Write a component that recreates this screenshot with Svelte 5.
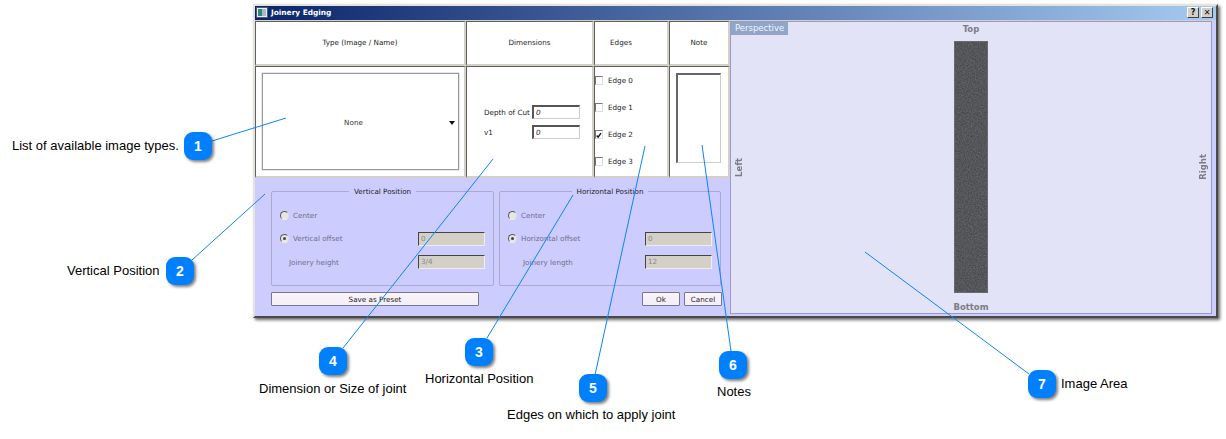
<!-- App.svelte - Joinery Edging dialog with numbered help callouts -->
<script lang="ts">
	const callouts = [
		{ n: 1, x: 184, y: 132, line: [212, 141, 286, 118], label: 'List of available image types.', lx: 12, ly: 139 },
		{ n: 2, x: 166, y: 257, line: [192, 260, 265, 194], label: 'Vertical Position', lx: 67, ly: 264 },
		{ n: 3, x: 465, y: 338, line: [487, 338, 573, 195], label: 'Horizontal Position', lx: 425, ly: 372 },
		{ n: 4, x: 319, y: 347, line: [343, 348, 493, 159], label: 'Dimension or Size of joint', lx: 259, ly: 382 },
		{ n: 5, x: 579, y: 374, line: [595, 375, 645, 146], label: 'Edges on which to apply joint', lx: 507, ly: 408 },
		{ n: 6, x: 719, y: 351, line: [731, 351, 702, 145], label: 'Notes', lx: 717, ly: 385 },
		{ n: 7, x: 1028, y: 370, line: [1029, 374, 865, 252], label: 'Image Area', lx: 1061, ly: 377 }
	];

	const edges = [
		{ name: 'Edge 0', checked: false },
		{ name: 'Edge 1', checked: false },
		{ name: 'Edge 2', checked: true },
		{ name: 'Edge 3', checked: false }
	];

	const groups = [
		{ title: 'Vertical Position', offset: 'Vertical offset', size: 'Joinery height', value: '3/4' },
		{ title: 'Horizontal Position', offset: 'Horizontal offset', size: 'Joinery length', value: '12' }
	];
</script>

<div class="page">
	<div class="window">
		<div class="titlebar">
			<svg class="app-icon" width="12" height="11" viewBox="0 0 12 11">
				<rect x="0.5" y="0.5" width="11" height="10" fill="#e8eef4" stroke="#4a5a78" />
				<rect x="2" y="2" width="4" height="7" fill="#2f8a70" />
				<rect x="6" y="2" width="4" height="7" fill="#a8b8d0" />
			</svg>
			<span class="title">Joinery Edging</span>
			<span class="title-btn">?</span>
			<span class="title-btn">✕</span>
		</div>

		<div class="body">
			<div class="left">
				<div class="table">
					<div class="cell head">Type (Image / Name)</div>
					<div class="cell head">Dimensions</div>
					<div class="cell head edges-head">Edges</div>
					<div class="cell head">Note</div>

					<div class="cell type-cell">
						<div class="combo">
							<span>None</span>
							<span class="arrow"></span>
						</div>
					</div>

					<div class="cell dims">
						<div class="dim-grid">
							<span>Depth of Cut</span>
							<span class="input">0</span>
							<span>v1</span>
							<span class="input">0</span>
						</div>
					</div>

					<div class="cell edges">
						{#each edges as edge}
							<div class="edge">
								<span class="check">
									{#if edge.checked}
										<svg width="9" height="9" viewBox="0 0 9 9">
											<path d="M1 4.5 L3.2 7 L7.5 1" fill="none" stroke="#111" stroke-width="2" />
										</svg>
									{/if}
								</span>
								{edge.name}
							</div>
						{/each}
					</div>

					<div class="cell note-cell">
						<div class="note"></div>
					</div>
				</div>

				<div class="lower">
					<div class="groups">
						{#each groups as group}
							<fieldset class="group">
								<legend>{group.title}</legend>
								<div class="row">
									<span class="radio"></span>
									<span>Center</span>
								</div>
								<div class="row">
									<span class="radio on"></span>
									<span>{group.offset}</span>
									<span class="field">0</span>
								</div>
								<div class="row indent">
									<span>{group.size}</span>
									<span class="field">{group.value}</span>
								</div>
							</fieldset>
						{/each}
					</div>
					<div class="actions">
						<button class="preset">Save as Preset</button>
						<button class="ok">Ok</button>
						<button class="cancel">Cancel</button>
					</div>
				</div>
			</div>

			<div class="preview">
				<span class="tab">Perspective</span>
				<span class="side top">Top</span>
				<span class="side vert left-label">Left</span>
				<svg class="board" width="34" height="252">
					<filter id="grain">
						<feTurbulence type="fractalNoise" baseFrequency="0.7" numOctaves="3" seed="4" />
						<feColorMatrix values="0 0 0 0 0.2  0 0 0 0 0.2  0 0 0 0 0.22  0.7 0.7 0 0 -0.45" />
					</filter>
					<rect width="34" height="252" fill="#48494d" />
					<rect width="34" height="252" filter="url(#grain)" />
					<rect x="0.5" y="0.5" width="33" height="251" fill="none" stroke="#6a6a6e" />
				</svg>
				<span class="side vert right-label">Right</span>
				<span class="side bottom">Bottom</span>
			</div>
		</div>
	</div>

	<svg class="lines" width="1226" height="439">
		{#each callouts as c}
			<line x1={c.line[0]} y1={c.line[1]} x2={c.line[2]} y2={c.line[3]} />
		{/each}
	</svg>

	{#each callouts as c}
		<span class="badge" style="left: {c.x}px; top: {c.y}px;">{c.n}</span>
		<span class="label" style="left: {c.lx}px; top: {c.ly}px;">{c.label}</span>
	{/each}
</div>

<style>
	:global(body) {
		margin: 0;
		background: #fff;
	}

	.page {
		position: relative;
		width: 1226px;
		height: 439px;
		padding: 4px 0 0 253px;
		box-sizing: border-box;
		overflow: hidden;
		font-family: 'DejaVu Sans', sans-serif;
		font-size: 7.2px;
		color: #222;
	}

	/* Dialog window */
	.window {
		width: 965px;
		height: 314px;
		box-sizing: border-box;
		background: #ccccff;
		border: 2px solid;
		border-color: #e4e2dc #4a4945 #4a4945 #e4e2dc;
		box-shadow: 2px 2px 3px rgba(0, 0, 0, 0.6);
		display: flex;
		flex-direction: column;
	}

	.titlebar {
		height: 15px;
		flex-shrink: 0;
		display: flex;
		align-items: center;
		gap: 2px;
		padding: 0 3px 1px 1px;
		background: linear-gradient(90deg, #0a246a, #a6caf0);
		border-bottom: 1px solid #d4d0c8;
		box-sizing: border-box;
	}

	.app-icon {
		flex-shrink: 0;
	}

	.title {
		flex: 1;
		font-weight: bold;
		font-size: 7.4px;
		color: #fff;
		padding-left: 1px;
	}

	.title-btn {
		width: 12px;
		height: 11px;
		box-sizing: border-box;
		display: flex;
		align-items: center;
		justify-content: center;
		background: #d4d0c8;
		border: 1px solid;
		border-color: #fff #404040 #404040 #fff;
		color: #111;
		font-size: 8px;
		font-weight: bold;
		line-height: 1;
	}

	.body {
		flex: 1;
		display: flex;
		min-height: 0;
	}

	.left {
		width: 475px;
		flex-shrink: 0;
		display: flex;
		flex-direction: column;
	}

	/* Top table */
	.table {
		display: grid;
		grid-template-columns: 211px 128px 75px 61px;
		grid-template-rows: 45px 112px;
		background: #fff;
	}

	.cell {
		box-sizing: border-box;
		border: 1px solid;
		border-width: 1px 2px 2px 1px;
		border-color: #5f5f5f #d4d0c8 #d4d0c8 #5f5f5f;
		background: #fff;
	}

	.head {
		display: flex;
		align-items: center;
		justify-content: center;
		padding-bottom: 2px;
	}

	.edges-head {
		padding-right: 20px;
	}

	.type-cell {
		padding: 6px 5px 6px 6px;
		display: flex;
	}

	.combo {
		flex: 1;
		position: relative;
		display: flex;
		align-items: center;
		justify-content: center;
		border: 1px solid #9a9a9a;
		box-shadow: 0 0 0 0.5px #ccc;
		color: #333;
		padding: 2px 14px 0 0;
	}

	.arrow {
		position: absolute;
		right: 3px;
		top: 47px;
		border: 3px solid transparent;
		border-top: 4px solid #111;
		border-bottom: 0;
	}

	.dims {
		display: flex;
		padding: 38px 0 0 17px;
	}

	.dim-grid {
		display: grid;
		grid-template-columns: 48px 48px;
		grid-auto-rows: 14px;
		row-gap: 6px;
		align-items: center;
	}

	.input {
		height: 14px;
		box-sizing: border-box;
		border: 1px solid;
		border-color: #555 #ccc #ccc #555;
		border-width: 2px 1px 1px 2px;
		padding-left: 2px;
		line-height: 11px;
		font-style: italic;
	}

	.edges {
		display: flex;
		flex-direction: column;
		padding-top: 8px;
		gap: 17px;
	}

	.edge {
		height: 10px;
		display: flex;
		align-items: center;
		gap: 5px;
	}

	.check {
		width: 8px;
		height: 9px;
		box-sizing: border-box;
		display: flex;
		border: 1px solid;
		border-color: #777 #ddd #ddd #777;
		overflow: visible;
	}

	.note-cell {
		padding: 6px 7px 13px 6px;
		display: flex;
	}

	.note {
		flex: 1;
		box-sizing: border-box;
		border: 1px solid;
		border-width: 2px 1px 1px 2px;
		border-color: #666 #ccc #ccc #666;
	}

	/* Lavender lower area */
	.lower {
		flex: 1;
		padding: 9px 8px 0 16px;
		display: flex;
		flex-direction: column;
		gap: 6px;
	}

	.groups {
		display: grid;
		grid-template-columns: 223px 222px;
		gap: 5px;
	}

	.group {
		margin: 0;
		height: 99px;
		box-sizing: border-box;
		border: 1px solid #aaaacc;
		border-radius: 2px;
		padding: 12px 8px 0 8px;
		color: #6f6f84;
		display: flex;
		flex-direction: column;
	}

	legend {
		margin: 0 auto;
		padding: 0 5px;
		color: #222;
		font-size: 7.2px;
		text-align: center;
	}

	.row {
		height: 14px;
		margin-bottom: 9.5px;
		display: flex;
		align-items: center;
		gap: 4px;
	}

	.row.indent {
		padding-left: 9px;
	}

	.group:last-child .row.indent {
		padding-left: 15px;
	}

	.radio {
		width: 9px;
		height: 9px;
		box-sizing: border-box;
		border-radius: 50%;
		background: #e8e6e0;
		border: 1.5px solid;
		border-color: #5a5a5a #ddd #eee #5a5a5a;
		position: relative;
	}

	.radio.on::after {
		content: '';
		position: absolute;
		left: 1.5px;
		top: 1.5px;
		width: 3px;
		height: 3px;
		border-radius: 50%;
		background: #444;
	}

	.field {
		margin-left: auto;
		width: 67px;
		height: 14px;
		box-sizing: border-box;
		background: #d4d0c8;
		border: 1px solid;
		border-color: #444 #eee #eee #444;
		color: #888;
		padding-left: 2px;
		line-height: 12px;
	}

	.actions {
		display: flex;
		gap: 4px;
	}

	.actions button {
		height: 14px;
		box-sizing: border-box;
		padding: 0;
		background: linear-gradient(#faf3f8, #f3eef6);
		border: 1px solid #77778a;
		border-radius: 1px;
		font-family: inherit;
		font-size: 7.2px;
		color: #222;
	}

	.preset {
		width: 208px;
		margin-right: auto;
	}

	.ok {
		width: 38px;
	}

	.cancel {
		width: 38px;
	}

	/* Preview panel */
	.preview {
		flex: 1;
		position: relative;
		box-sizing: border-box;
		height: 293px;
		margin: 0 4px 0 0;
		background: #e3e3f8;
		border: 1px solid #9999cc;
		display: grid;
		grid-template-columns: 1fr 34px 1fr;
		grid-template-rows: 19px 252px 1fr;
		justify-items: center;
		align-items: center;
		color: #7c7c86;
		font-size: 8.5px;
		font-weight: bold;
	}

	.tab {
		position: absolute;
		left: 0;
		top: 0;
		height: 13px;
		padding: 0 4px;
		background: #8fa6c8;
		color: #f2f4fa;
		font-size: 8.5px;
		font-weight: normal;
		line-height: 13px;
	}

	.top,
	.bottom {
		grid-column: 2;
	}

	.top {
		grid-row: 1;
		align-self: start;
		margin-top: 2px;
	}

	.bottom {
		grid-row: 3;
		white-space: nowrap;
		align-self: end;
		margin-bottom: 1px;
	}

	.board {
		grid-column: 2;
		grid-row: 2;
		display: block;
	}

	.vert {
		grid-row: 2;
		writing-mode: vertical-rl;
		transform: rotate(180deg);
	}

	.left-label {
		grid-column: 1;
		justify-self: start;
		margin-left: 3px;
	}

	.right-label {
		grid-column: 3;
		justify-self: end;
		margin-right: 3px;
	}

	/* Callouts on top of everything */
	.lines {
		position: absolute;
		left: 0;
		top: 0;
		pointer-events: none;
	}

	.lines line {
		stroke: #0a84ff;
		stroke-width: 1;
	}

	.badge {
		position: absolute;
		width: 28px;
		height: 28px;
		border-radius: 9px;
		background: #0080ff;
		box-shadow: 2px 2px 3px rgba(0, 0, 0, 0.5);
		color: #fff;
		font-family: 'Liberation Sans', sans-serif;
		font-weight: bold;
		font-size: 14px;
		line-height: 28px;
		text-align: center;
	}

	.label {
		position: absolute;
		font-family: 'Liberation Sans', sans-serif;
		font-size: 13px;
		line-height: 14px;
		color: #000;
		white-space: nowrap;
	}
</style>
